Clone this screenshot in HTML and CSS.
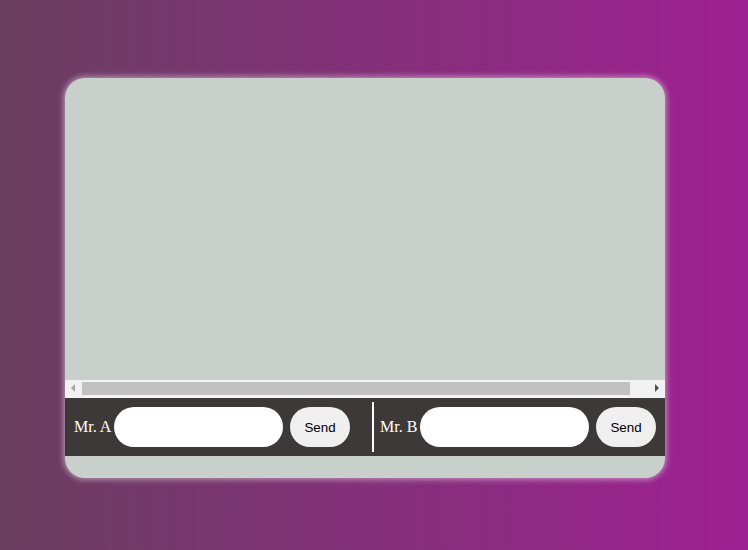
FILE: index.html
```html
<!DOCTYPE html>
<html>
<head>
<meta charset="utf-8">
<link rel="stylesheet" href="styles.css">
</head>
<body>
<div class="card">
  <div class="chat"></div>
  <div class="hscroll">
    <div class="arrow left"></div>
    <div class="track"><div class="thumb"></div></div>
    <div class="arrow right"></div>
  </div>
  <div class="bar">
    <div class="side">
      <span class="name">Mr. A</span>
      <input class="msg" type="text">
      <button class="send">Send</button>
    </div>
    <div class="divider"></div>
    <div class="side">
      <span class="name">Mr. B</span>
      <input class="msg" type="text">
      <button class="send">Send</button>
    </div>
  </div>
</div>
</body>
</html>
```

FILE: styles.css
```css
html, body {
  margin: 0;
  height: 100%;
}
body {
  background: linear-gradient(to right, #693e60, #9e2192);
  padding: 78px 0 0 65px;
  box-sizing: border-box;
  font-family: "Liberation Serif", serif;
}
.card {
  width: 600px;
  height: 400px;
  background: #c9d0cc;
  border-radius: 20px;
  box-shadow: 0 0 6px 1px rgba(255, 255, 255, 0.55);
  overflow: hidden;
  display: flex;
  flex-direction: column;
}
.chat {
  height: 302px;
}
.hscroll {
  height: 17px;
  background: #f1f1f1;
  display: flex;
  align-items: center;
  border-bottom: 1px solid #f6f6f6;
}
.arrow {
  width: 17px;
  height: 17px;
  position: relative;
}
.arrow::after {
  content: "";
  position: absolute;
  top: 4px;
  border-top: 4px solid transparent;
  border-bottom: 4px solid transparent;
}
.arrow.left::after {
  left: 6px;
  border-right: 4px solid #a3a3a3;
}
.arrow.right::after {
  left: 7px;
  border-left: 4px solid #505050;
}
.track {
  flex: 1;
  height: 13px;
}
.thumb {
  width: 548px;
  height: 13px;
  background: #c1c1c1;
}
.bar {
  height: 58px;
  background: #3e3939;
  display: flex;
  align-items: center;
  padding-left: 9px;
}
.side {
  display: flex;
  align-items: center;
}
.name {
  color: #ffffff;
  font-size: 16px;
  width: 40px;
}
.msg {
  width: 169px;
  height: 40px;
  box-sizing: border-box;
  border: none;
  border-radius: 20px;
  background: #ffffff;
  padding: 0 14px;
  outline: none;
}
.send {
  margin-left: 7px;
  width: 60px;
  height: 40px;
  border: none;
  border-radius: 20px;
  background: #efefef;
  font-family: "Liberation Sans", Arial, sans-serif;
  font-size: 13.33px;
  color: #000;
  padding: 0;
}
.divider {
  width: 2px;
  height: 50px;
  background: #ffffff;
  margin: 0 6px 0 22px;
}
```
